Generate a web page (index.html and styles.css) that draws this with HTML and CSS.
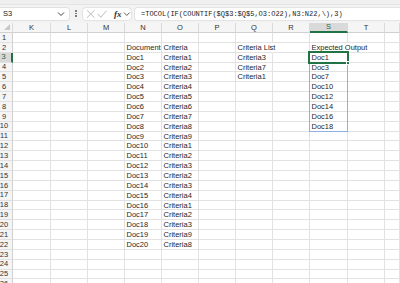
FILE: index.html
```html
<!DOCTYPE html>
<html>
<head>
<meta charset="utf-8">
<link rel="stylesheet" href="styles.css">
</head>
<body>
<div class="app">
  <div class="topstrip"></div>
  <div class="fbar">
    <div class="namebox">
      <span class="nb-text">S3</span>
      <svg class="chev" width="8" height="6" viewBox="0 0 8 6"><path d="M1 1.5 L4 4.5 L7 1.5" fill="none" stroke="#444" stroke-width="1"/></svg>
    </div>
    <div class="dots">
      <span></span><span></span><span></span>
    </div>
    <div class="fx-icons">
      <svg width="10" height="10" viewBox="0 0 10 10"><path d="M1 1 L9 9 M9 1 L1 9" stroke="#b8b8b8" stroke-width="1" fill="none"/></svg>
      <svg width="11" height="10" viewBox="0 0 11 10"><path d="M1 5 L4 8.5 L10 1.5" stroke="#b8b8b8" stroke-width="1" fill="none"/></svg>
      <span class="fx">fx</span>
      <svg width="8" height="6" viewBox="0 0 8 6"><path d="M1 1.5 L4 4.5 L7 1.5" fill="none" stroke="#555" stroke-width="1"/></svg>
    </div>
    <div class="formula">=TOCOL(IF(COUNTIF($Q$3:$Q$5,O3:O22),N3:N22,\),3)</div>
  </div>
  <div class="sheet">
    <div class="grid">
      <div class="ch corner"><svg width="6" height="6" viewBox="0 0 6 6"><path d="M6 0 L6 6 L0 6 Z" fill="#c8c8c8"/></svg></div>
      <div class="ch">K</div><div class="ch">L</div><div class="ch">M</div><div class="ch">N</div><div class="ch">O</div><div class="ch">P</div><div class="ch">Q</div><div class="ch">R</div><div class="ch sel">S</div><div class="ch">T</div><div class="ch"></div>

      <div class="rh"><span>1</span></div><div class="c"></div><div class="c"></div><div class="c"></div><div class="c"></div><div class="c"></div><div class="c"></div><div class="c"></div><div class="c"></div><div class="c"></div><div class="c"></div><div class="c"></div>
      <div class="rh"><span>2</span></div><div class="c"></div><div class="c"></div><div class="c"></div><div class="c clip">Documents</div><div class="c">Criteria</div><div class="c"></div><div class="c over">Criteria List</div><div class="c"></div><div class="c over">Expected Output</div><div class="c"></div><div class="c"></div>
      <div class="rh rsel"><span>3</span></div><div class="c"></div><div class="c"></div><div class="c"></div><div class="c">Doc1</div><div class="c">Criteria1</div><div class="c"></div><div class="c">Criteria3</div><div class="c"></div><div class="c">Doc1</div><div class="c"></div><div class="c"></div>
      <div class="rh"><span>4</span></div><div class="c"></div><div class="c"></div><div class="c"></div><div class="c">Doc2</div><div class="c">Criteria2</div><div class="c"></div><div class="c">Criteria7</div><div class="c"></div><div class="c">Doc3</div><div class="c"></div><div class="c"></div>
      <div class="rh"><span>5</span></div><div class="c"></div><div class="c"></div><div class="c"></div><div class="c">Doc3</div><div class="c">Criteria3</div><div class="c"></div><div class="c">Criteria1</div><div class="c"></div><div class="c">Doc7</div><div class="c"></div><div class="c"></div>
      <div class="rh"><span>6</span></div><div class="c"></div><div class="c"></div><div class="c"></div><div class="c">Doc4</div><div class="c">Criteria4</div><div class="c"></div><div class="c"></div><div class="c"></div><div class="c">Doc10</div><div class="c"></div><div class="c"></div>
      <div class="rh"><span>7</span></div><div class="c"></div><div class="c"></div><div class="c"></div><div class="c">Doc5</div><div class="c">Criteria5</div><div class="c"></div><div class="c"></div><div class="c"></div><div class="c">Doc12</div><div class="c"></div><div class="c"></div>
      <div class="rh"><span>8</span></div><div class="c"></div><div class="c"></div><div class="c"></div><div class="c">Doc6</div><div class="c">Criteria6</div><div class="c"></div><div class="c"></div><div class="c"></div><div class="c">Doc14</div><div class="c"></div><div class="c"></div>
      <div class="rh"><span>9</span></div><div class="c"></div><div class="c"></div><div class="c"></div><div class="c">Doc7</div><div class="c">Criteria7</div><div class="c"></div><div class="c"></div><div class="c"></div><div class="c">Doc16</div><div class="c"></div><div class="c"></div>
      <div class="rh"><span>10</span></div><div class="c"></div><div class="c"></div><div class="c"></div><div class="c">Doc8</div><div class="c">Criteria8</div><div class="c"></div><div class="c"></div><div class="c"></div><div class="c">Doc18</div><div class="c"></div><div class="c"></div>
      <div class="rh"><span>11</span></div><div class="c"></div><div class="c"></div><div class="c"></div><div class="c">Doc9</div><div class="c">Criteria9</div><div class="c"></div><div class="c"></div><div class="c"></div><div class="c"></div><div class="c"></div><div class="c"></div>
      <div class="rh"><span>12</span></div><div class="c"></div><div class="c"></div><div class="c"></div><div class="c">Doc10</div><div class="c">Criteria1</div><div class="c"></div><div class="c"></div><div class="c"></div><div class="c"></div><div class="c"></div><div class="c"></div>
      <div class="rh"><span>13</span></div><div class="c"></div><div class="c"></div><div class="c"></div><div class="c">Doc11</div><div class="c">Criteria2</div><div class="c"></div><div class="c"></div><div class="c"></div><div class="c"></div><div class="c"></div><div class="c"></div>
      <div class="rh"><span>14</span></div><div class="c"></div><div class="c"></div><div class="c"></div><div class="c">Doc12</div><div class="c">Criteria3</div><div class="c"></div><div class="c"></div><div class="c"></div><div class="c"></div><div class="c"></div><div class="c"></div>
      <div class="rh"><span>15</span></div><div class="c"></div><div class="c"></div><div class="c"></div><div class="c">Doc13</div><div class="c">Criteria2</div><div class="c"></div><div class="c"></div><div class="c"></div><div class="c"></div><div class="c"></div><div class="c"></div>
      <div class="rh"><span>16</span></div><div class="c"></div><div class="c"></div><div class="c"></div><div class="c">Doc14</div><div class="c">Criteria3</div><div class="c"></div><div class="c"></div><div class="c"></div><div class="c"></div><div class="c"></div><div class="c"></div>
      <div class="rh"><span>17</span></div><div class="c"></div><div class="c"></div><div class="c"></div><div class="c">Doc15</div><div class="c">Criteria4</div><div class="c"></div><div class="c"></div><div class="c"></div><div class="c"></div><div class="c"></div><div class="c"></div>
      <div class="rh"><span>18</span></div><div class="c"></div><div class="c"></div><div class="c"></div><div class="c">Doc16</div><div class="c">Criteria1</div><div class="c"></div><div class="c"></div><div class="c"></div><div class="c"></div><div class="c"></div><div class="c"></div>
      <div class="rh"><span>19</span></div><div class="c"></div><div class="c"></div><div class="c"></div><div class="c">Doc17</div><div class="c">Criteria2</div><div class="c"></div><div class="c"></div><div class="c"></div><div class="c"></div><div class="c"></div><div class="c"></div>
      <div class="rh"><span>20</span></div><div class="c"></div><div class="c"></div><div class="c"></div><div class="c">Doc18</div><div class="c">Criteria3</div><div class="c"></div><div class="c"></div><div class="c"></div><div class="c"></div><div class="c"></div><div class="c"></div>
      <div class="rh"><span>21</span></div><div class="c"></div><div class="c"></div><div class="c"></div><div class="c">Doc19</div><div class="c">Criteria9</div><div class="c"></div><div class="c"></div><div class="c"></div><div class="c"></div><div class="c"></div><div class="c"></div>
      <div class="rh"><span>22</span></div><div class="c"></div><div class="c"></div><div class="c"></div><div class="c">Doc20</div><div class="c">Criteria8</div><div class="c"></div><div class="c"></div><div class="c"></div><div class="c"></div><div class="c"></div><div class="c"></div>
      <div class="rh"><span>23</span></div><div class="c"></div><div class="c"></div><div class="c"></div><div class="c"></div><div class="c"></div><div class="c"></div><div class="c"></div><div class="c"></div><div class="c"></div><div class="c"></div><div class="c"></div>
      <div class="rh"><span>24</span></div><div class="c"></div><div class="c"></div><div class="c"></div><div class="c"></div><div class="c"></div><div class="c"></div><div class="c"></div><div class="c"></div><div class="c"></div><div class="c"></div><div class="c"></div>
      <div class="rh"><span>25</span></div><div class="c"></div><div class="c"></div><div class="c"></div><div class="c"></div><div class="c"></div><div class="c"></div><div class="c"></div><div class="c"></div><div class="c"></div><div class="c"></div><div class="c"></div>
      <div class="rh"><span>26</span></div><div class="c"></div><div class="c"></div><div class="c"></div><div class="c"></div><div class="c"></div><div class="c"></div><div class="c"></div><div class="c"></div><div class="c"></div><div class="c"></div><div class="c"></div>
    </div>
    <div class="overlay">
      <div class="spill"></div>
      <div class="active"><span class="handle"></span></div>
    </div>
  </div>
</div>
</body>
</html>
```

FILE: styles.css
```css
* { box-sizing: border-box; }
html, body { margin: 0; padding: 0; background: #ffffff; }
body { width: 400px; height: 283px; overflow: hidden; font-family: "Liberation Sans", Arial, sans-serif; }
.app { width: 400px; height: 283px; overflow: hidden; background: #f3f3f3; }

.topstrip { height: 5px; background: #efefef; border-bottom: 1px solid #e4e4e4; }

.fbar {
  height: 18px;
  display: flex;
  align-items: center;
  background: #f3f3f3;
  padding: 1px 0 2px 0;
}
.namebox {
  width: 70px;
  height: 14px;
  background: #ffffff;
  border: 1px solid #e0e0e0;
  border-left: none;
  border-radius: 0 4px 4px 0;
  display: flex;
  align-items: center;
  justify-content: space-between;
  padding: 0 4px 0 3px;
  font-size: 7.5px;
  color: #222;
}
.dots {
  width: 12px;
  display: flex;
  flex-direction: column;
  align-items: center;
  gap: 1px;
}
.dots span { width: 1.5px; height: 1.5px; background: #666; border-radius: 50%; }
.fx-icons {
  width: 50px;
  height: 14px;
  background: #ffffff;
  border: 1px solid #e3e3e3;
  border-radius: 4px;
  display: flex;
  align-items: center;
  gap: 2px;
  padding-left: 3px;
}
.fx {
  font-family: "Liberation Serif", "Times New Roman", serif;
  font-style: italic;
  font-weight: bold;
  font-size: 9px;
  color: #333;
  margin-left: 4px;
}
.formula {
  flex: 1;
  height: 14px;
  margin-left: 2px;
  background: #ffffff;
  border: 1px solid #e3e3e3;
  border-right: none;
  border-radius: 4px 0 0 4px;
  font-family: "Liberation Mono", "Courier New", monospace;
  font-size: 7px;
  color: #222;
  display: flex;
  align-items: center;
  padding-left: 6px;
  white-space: nowrap;
  overflow: hidden;
}

.sheet { position: relative; background: #ffffff; }
.grid, .overlay {
  display: grid;
  grid-template-columns: 13px 38px 37px 37px 37px 37px 37px 37px 37px 38px 37px 1fr;
  grid-template-rows: 10px;
  grid-auto-rows: 9.87px;
}
.overlay { position: absolute; inset: 0; pointer-events: none; }

.ch {
  background: #f5f5f5;
  border-right: 1px solid #dadada;
  border-bottom: 1px solid #d0d0d0;
  font-size: 7.5px;
  color: #333;
  display: flex;
  align-items: center;
  justify-content: center;
  line-height: 1;
}
.ch.corner { justify-content: flex-end; align-items: flex-end; padding: 0 2px 2px 0; }
.ch.sel { background: #d9d9d9; color: #1b6a3e; border-bottom: 2px solid #217346; }

.rh {
  background: #f5f5f5;
  border-right: 1px solid #d0d0d0;
  border-bottom: 1px solid #e0e0e0;
  font-size: 7.5px;
  color: #333;
  display: flex;
  align-items: center;
  justify-content: center;
  padding-right: 4px;
  overflow: hidden;
  line-height: 1;
}
.rh span { white-space: nowrap; }
.rh.rsel { background: #d9d9d9; color: #1b6a3e; border-right: 2px solid #217346; }

.c {
  border-right: 1px solid #e2e2e2;
  border-bottom: 1px solid #e2e2e2;
  font-size: 7.5px;
  color: #1f1f1f;
  line-height: 10px;
  padding-left: 1.5px;
  white-space: nowrap;
}
.c.clip { overflow: hidden; }
.c.over { border-right-color: transparent; }

.spill {
  grid-column: 10;
  grid-row: 4 / 12;
  border: 1px solid #8fb0e3;
  margin-left: -1px;
  margin-top: -1px;
}
.active {
  grid-column: 10;
  grid-row: 4;
  border: 2px solid #217346;
  margin: -2px -1px -1px -2px;
  position: relative;
}
.handle {
  position: absolute;
  right: -3px;
  bottom: -3px;
  width: 4px;
  height: 4px;
  background: #217346;
  border: 1px solid #ffffff;
}
```
